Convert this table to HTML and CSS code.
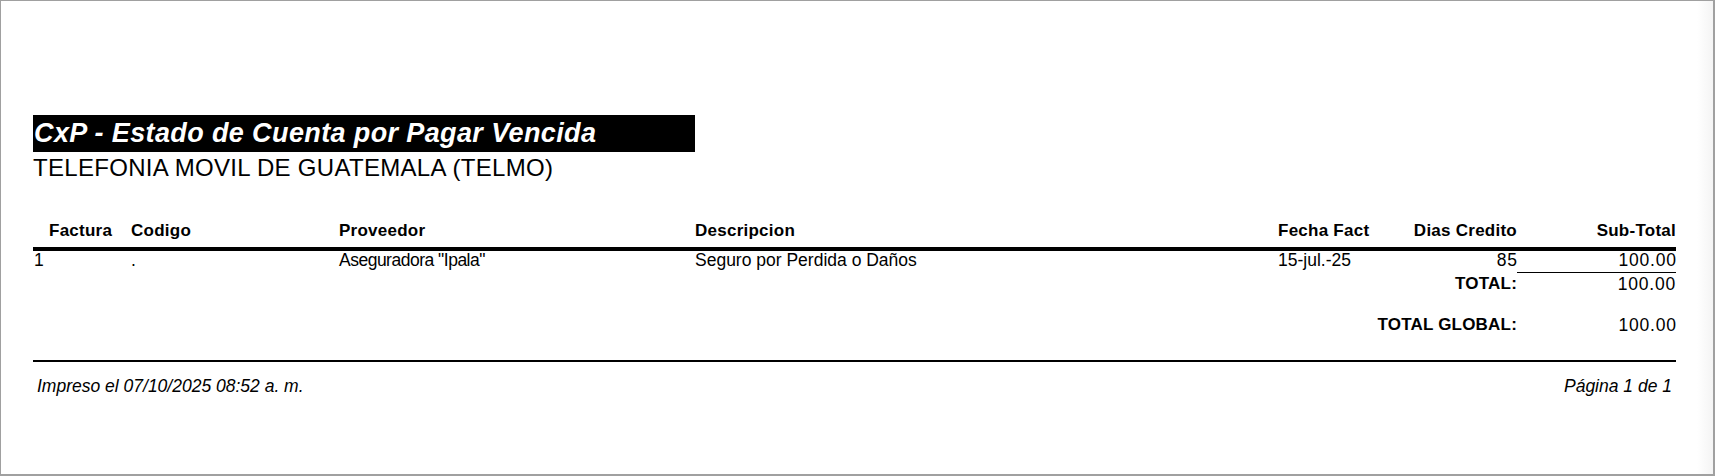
FILE: index.html
```html
<!DOCTYPE html>
<html lang="es">
<head>
<meta charset="utf-8">
<title>CxP - Estado de Cuenta por Pagar Vencida</title>
<link rel="stylesheet" href="styles.css">
</head>
<body>
<div class="page">
  <div class="report">
    <div class="title">CxP - Estado de Cuenta por Pagar Vencida</div>
    <div class="company">TELEFONIA MOVIL DE GUATEMALA (TELMO)</div>

    <div class="grid head">
      <div class="hpad">Factura</div>
      <div>Codigo</div>
      <div>Proveedor</div>
      <div>Descripcion</div>
      <div>Fecha Fact</div>
      <div class="r">Dias Credito</div>
      <div class="r">Sub-Total</div>
    </div>

    <div class="grid row">
      <div class="c1 num">1</div>
      <div>.</div>
      <div class="tight">Aseguradora "Ipala"</div>
      <div>Seguro por Perdida o Daños</div>
      <div>15-jul.-25</div>
      <div class="r num">85</div>
      <div class="r num">100.00</div>
    </div>

    <div class="grid total">
      <div class="span5"></div>
      <div class="r b">TOTAL:</div>
      <div class="r num line">100.00</div>
    </div>

    <div class="grid global">
      <div class="span4"></div>
      <div class="r b label2">TOTAL GLOBAL:</div>
      <div class="r num">100.00</div>
    </div>

    <div class="footer">
      <span>Impreso el 07/10/2025 08:52 a. m.</span>
      <span>Página 1 de 1</span>
    </div>
  </div>
</div>
</body>
</html>
```

FILE: styles.css
```css
html, body {
  margin: 0;
  padding: 0;
  background: #ffffff;
}

.page {
  box-sizing: border-box;
  width: 1715px;
  height: 476px;
  border: 1px solid #a0a0a0;
  border-right-width: 2px;
  border-bottom-width: 2px;
  background: linear-gradient(to right, #ffffff calc(100% - 16px), #f4f4f4);
  font-family: "Liberation Sans", Arial, sans-serif;
  color: #000;
  overflow: hidden;
}

.report {
  width: 1643px;
  padding: 114px 0 0 32px;
}

.title {
  width: 662px;
  height: 37px;
  box-sizing: border-box;
  background: #000;
  color: #fff;
  font-size: 27px;
  line-height: 37px;
  font-weight: bold;
  font-style: italic;
  padding-left: 1px;
  letter-spacing: 0.38px;
  white-space: nowrap;
}

.company {
  margin-top: 4px;
  font-size: 24px;
  line-height: 24px;
  letter-spacing: 0.3px;
  white-space: nowrap;
}

.grid {
  display: grid;
  grid-template-columns: 98px 208px 356px 583px 132px 107px 159px;
  white-space: nowrap;
}

.head {
  margin-top: 41px;
  font-size: 17px;
  line-height: 20px;
  font-weight: bold;
  letter-spacing: 0.25px;
  padding-bottom: 6px;
  border-bottom: 4px solid #000;
}

.hpad { padding-left: 16px; }
.c1 { padding-left: 1px; }

.row {
  font-size: 17.5px;
  line-height: 18px;
  padding-bottom: 3px;
}

.tight { letter-spacing: -0.5px; }

.total, .global {
  font-size: 17.5px;
  line-height: 18px;
}

.total .b, .global .b {
  font-size: 17px;
  letter-spacing: 0.2px;
}

.num { letter-spacing: 0.8px; }
.r.num { margin-right: -0.8px; }

.total > div { padding-top: 3px; }
.total .line { border-top: 1px solid #000; padding-top: 2px; margin-right: 0; padding-right: 0; }

.global { margin-top: 23px; }

.span5 { grid-column: 1 / span 5; }
.span4 { grid-column: 1 / span 4; }
.label2 { grid-column: 5 / span 2; }
.r { text-align: right; }
.b { font-weight: bold; }

.footer {
  margin-top: 26px;
  border-top: 2px solid #000;
  display: flex;
  justify-content: space-between;
  padding: 15px 4px 0 4px;
  font-size: 17.5px;
  line-height: 18px;
  font-style: italic;
}
```
